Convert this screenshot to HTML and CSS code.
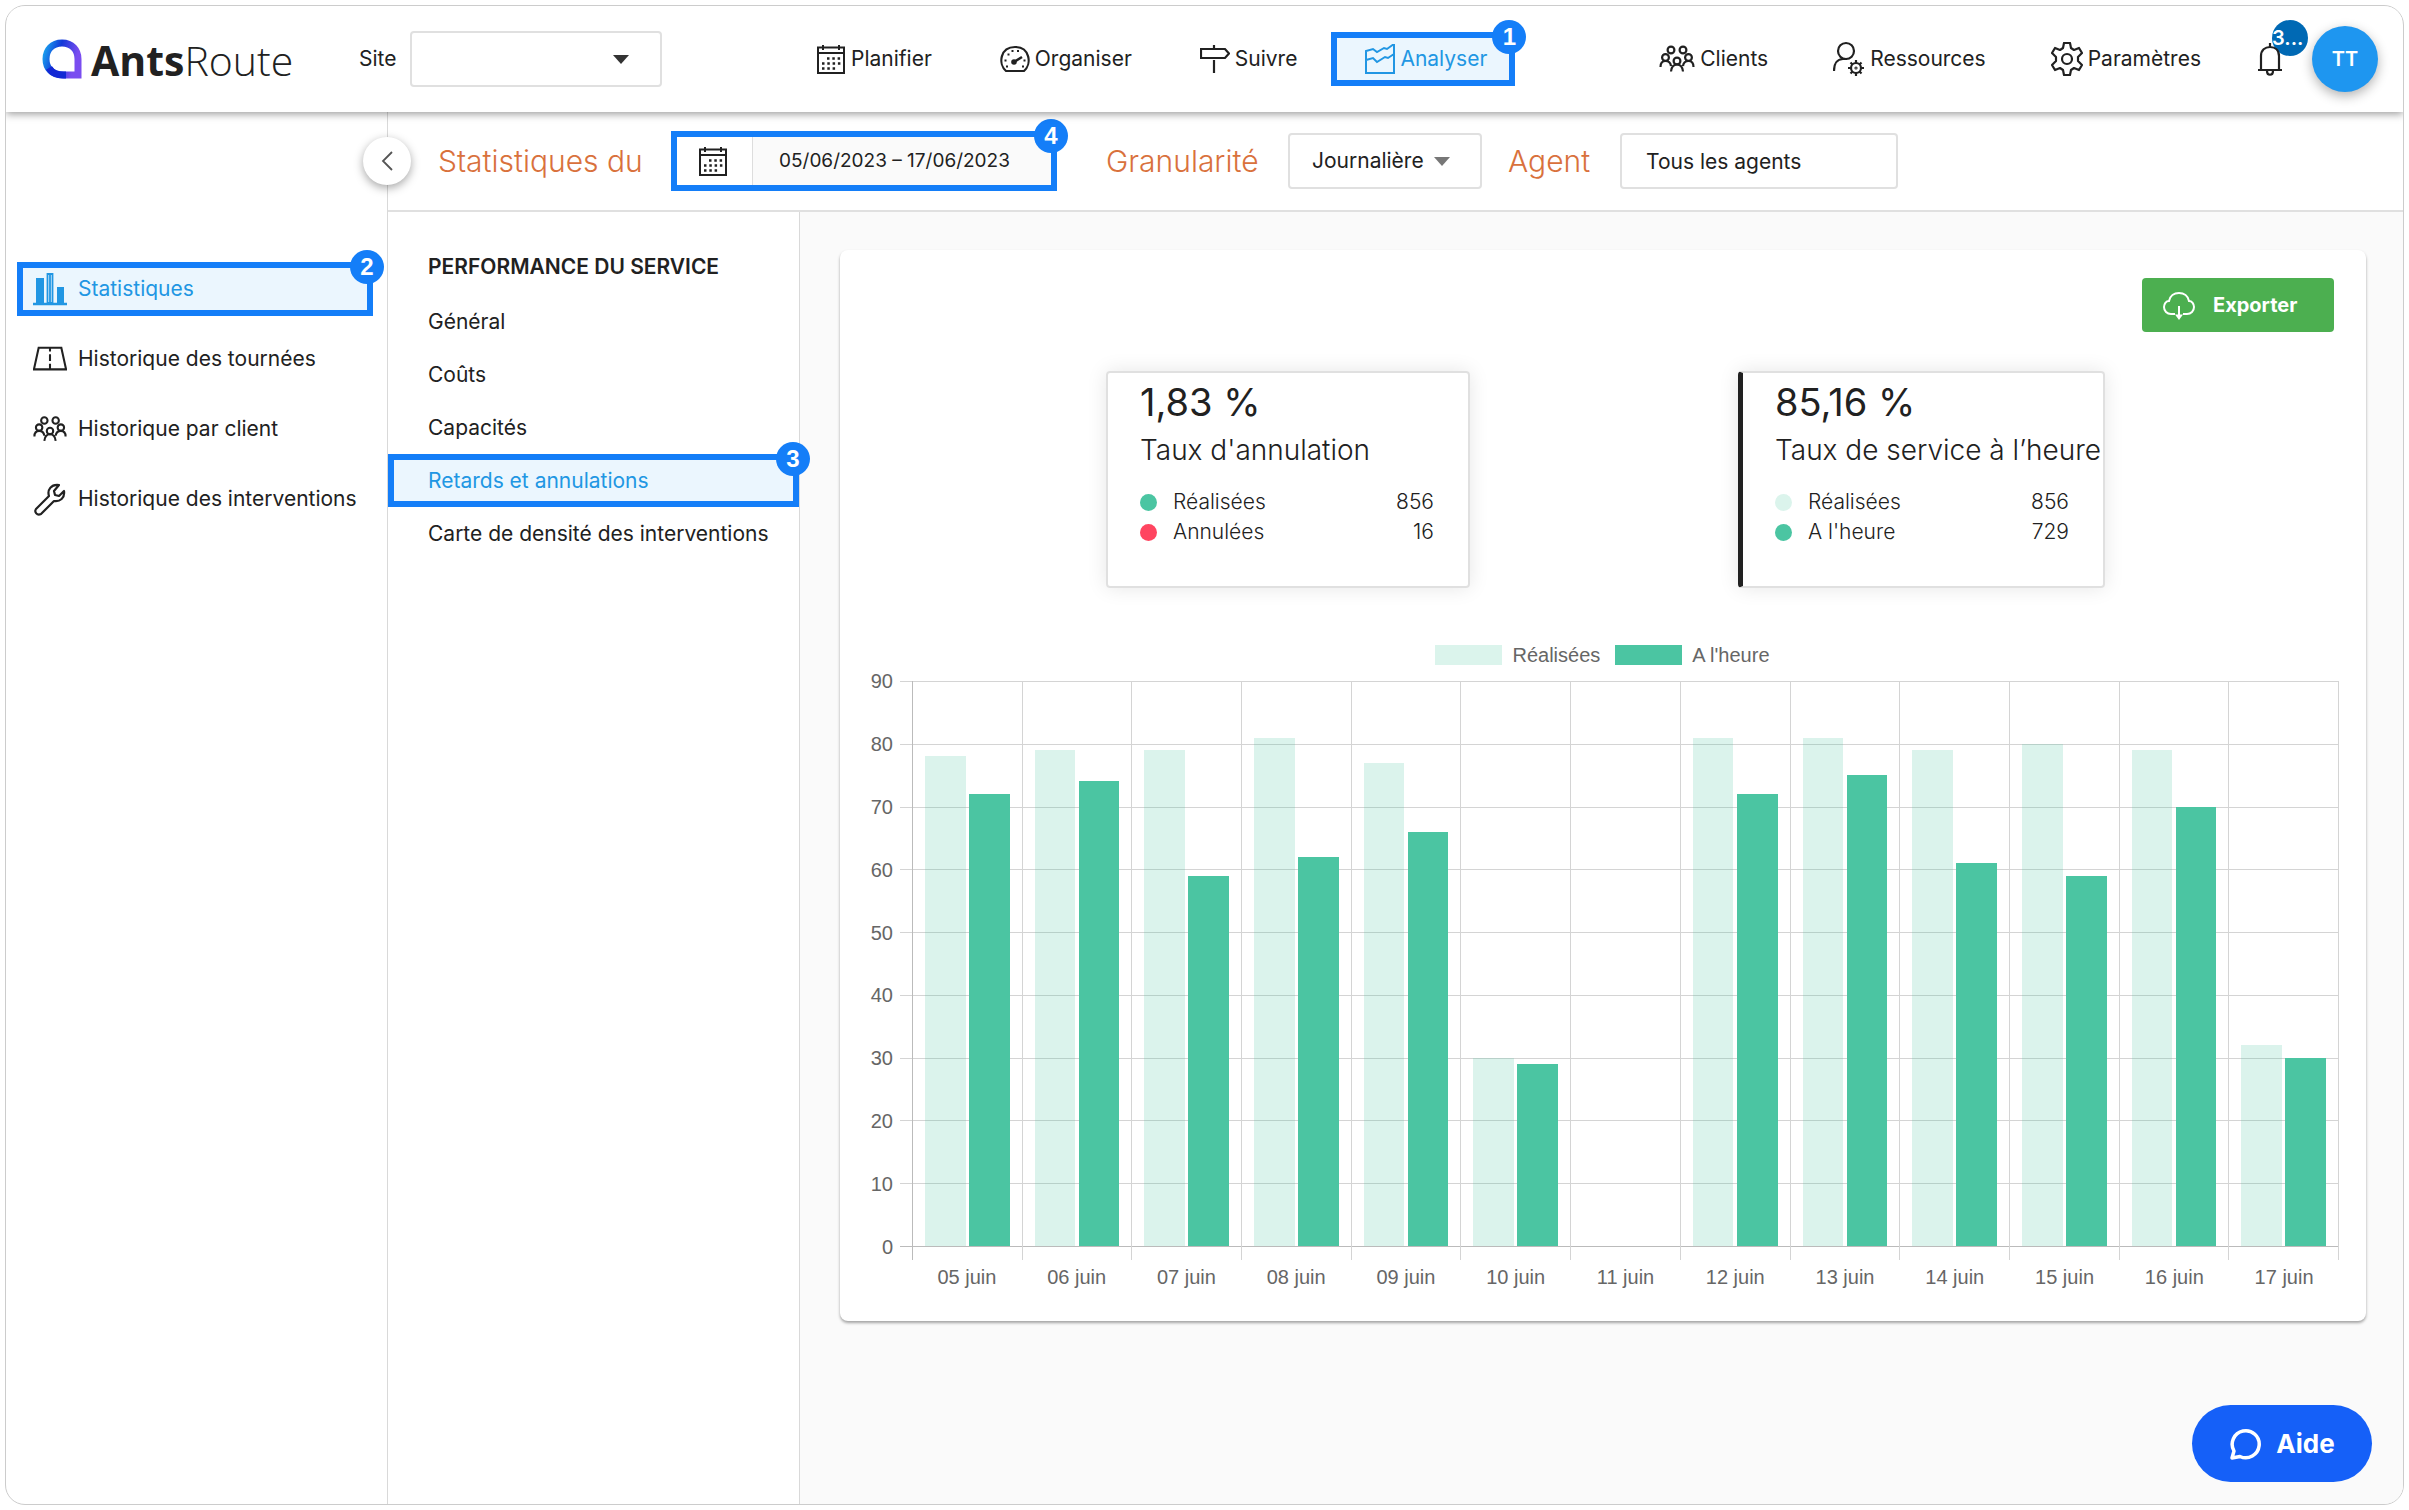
FILE: index.html
```html
<!DOCTYPE html>
<html lang="fr">
<head>
    <meta charset="UTF-8">
    <meta name="viewport" content="width=device-width, initial-scale=1.0">
    <title>AntsRoute - Statistiques</title>
    <link rel="stylesheet" href="styles.css">
</head>
<body>
    <!-- icônes partagées -->
    <svg class="sprite" width="0" height="0" aria-hidden="true">
        <symbol id="ico-calendar" viewBox="0 0 30 30">
            <path d="M2 3.500h26V29H2zM2 9h26M7 1v5M23 1v5" fill="none" stroke="currentColor" stroke-width="2"/>
            <path d="M11 14.500h13.500M6 19.500h19M6 24.500h13.500" fill="none" stroke="currentColor" stroke-width="2.500" stroke-dasharray="2.500 2.800"/>
        </symbol>
        <symbol id="ico-clients" viewBox="0 0 36 28">
            <g fill="none" stroke="currentColor" stroke-width="2.200">
                <circle cx="12" cy="5" r="3.400"/>
                <circle cx="24" cy="5" r="3.400"/>
                <circle cx="6.500" cy="12.500" r="3.400"/>
                <circle cx="29.500" cy="12.500" r="3.400"/>
                <circle cx="18" cy="16" r="3.400"/>
                <path d="M1.500 22c0-4 2-6 5-6s5 1.500 5.500 5M24 21c.5-3.500 2.500-5 5.500-5s5 2 5 6M12 26.500c.5-5 2.500-7 6-7s5.500 2 6 7"/>
            </g>
        </symbol>
    </svg>

    <div class="app">
        <header class="header">
            <a class="logo" href="#">
                <svg class="logo-mark" viewBox="0 0 40 40">
                    <defs>
                        <linearGradient id="logoGradient" x1="0" y1="0" x2="1" y2="0.300">
                            <stop offset="0" stop-color="#1aa0ee"/>
                            <stop offset="0.450" stop-color="#1238d8"/>
                            <stop offset="1" stop-color="#7a4df0"/>
                        </linearGradient>
                    </defs>
                    <path d="M20 4C10 4 4 11 4 20s6 16 16 16h16V20C36 11 30 4 20 4z" fill="none" stroke="url(#logoGradient)" stroke-width="7"/>
                    <path d="M7 29c3 5 8 7 15 7h2" fill="none" stroke="#1328d4" stroke-width="7"/>
                </svg>
                <span class="logo-text"><b>Ants</b>Route</span>
            </a>
            <label class="site-label" for="site">Site</label>
            <span class="select select-site">
                <select id="site"><option></option></select>
            </span>

            <nav class="nav nav-main">
                <a class="nav-item" href="#">
                    <svg class="ico" viewBox="0 0 30 30"><use href="#ico-calendar"/></svg>
                    Planifier
                </a>
                <a class="nav-item" href="#">
                    <svg class="ico" viewBox="0 0 30 30">
                        <path d="M6 27C-2 20 0 3 15 3s17 17 9 24z" fill="none" stroke="currentColor" stroke-width="2.200"/>
                        <path d="M6 22.500h2M4.500 16.500h2M7.500 10.500h2M11.500 7h2M17 7h2M23.500 16.500h2M22 22.500h2" stroke="currentColor" stroke-width="2" fill="none"/>
                        <path d="M14 18l8-5" stroke="currentColor" stroke-width="2.500"/>
                        <circle cx="14" cy="18" r="2.800" fill="currentColor"/>
                    </svg>
                    Organiser
                </a>
                <a class="nav-item" href="#">
                    <svg class="ico" viewBox="0 0 30 30">
                        <path d="M1 5h24l4 4.500-4 4.500H1zM14 1v4M14 16v13" fill="none" stroke="currentColor" stroke-width="2.200"/>
                    </svg>
                    Suivre
                </a>
                <a class="nav-item active" href="#">
                    <svg class="ico" viewBox="0 0 30 30">
                        <path d="M1 29V7l7-2 4 3 7-4 3 1 7-5v29zM1 16l7-2 4 4 8-5 3 1 6-4" fill="none" stroke="currentColor" stroke-width="2"/>
                    </svg>
                    Analyser
                    <span class="step">1</span>
                </a>
            </nav>

            <nav class="nav nav-side">
                <a class="nav-item" href="#">
                    <svg class="ico ico-wide" viewBox="0 0 36 28"><use href="#ico-clients"/></svg>
                    Clients
                </a>
                <a class="nav-item" href="#">
                    <svg class="ico ico-user" viewBox="0 0 32 36">
                        <g fill="none" stroke="currentColor" stroke-width="2.200">
                            <circle cx="13" cy="10" r="8"/>
                            <path d="M1 30c0-7 3-12 9-12h4"/>
                            <circle cx="23" cy="27" r="5"/>
                            <circle cx="23" cy="27" r="0.500"/>
                            <path d="M23 19v3M23 32v3M15 27h3M28 27h3M17.500 21.500l2 2M26.500 30.500l2 2M28.500 21.500l-2 2M19.500 30.500l-2 2"/>
                        </g>
                    </svg>
                    Ressources
                </a>
                <a class="nav-item" href="#">
                    <svg class="ico ico-gear" viewBox="0 0 32 34">
                        <path d="M13 1h6l1 5 3 2 5-2 3 5-4 4v4l4 4-3 5-5-2-3 2-1 5h-6l-1-5-3-2-5 2-3-5 4-4v-4l-4-4 3-5 5 2 3-2z" fill="none" stroke="currentColor" stroke-width="2.200" stroke-linejoin="round"/>
                        <circle cx="16" cy="17" r="5" fill="none" stroke="currentColor" stroke-width="2.200"/>
                    </svg>
                    Paramètres
                </a>
            </nav>

            <button class="bell" type="button" aria-label="Notifications">
                <svg viewBox="0 0 26 34">
                    <path d="M1 28h24M4 28V14c0-6 4-9 9-9s9 3 9 9v14M13 5V1M10 29c0 5 6 5 6 0" fill="none" stroke="currentColor" stroke-width="2.200"/>
                </svg>
                <span class="bell-count">3...</span>
            </button>
            <button class="avatar" type="button">TT</button>
        </header>

        <div class="body">
            <aside class="sidebar">
                <a class="side-item active" href="#">
                    <svg class="side-ico" viewBox="0 0 34 34">
                        <path d="M0 32h34" stroke="currentColor" stroke-width="2.500"/>
                        <path d="M3 6h8v26H3zM24 15h7v17h-7z" fill="currentColor"/>
                        <path d="M14.500 2h5v29h-5zM17 3v28" fill="none" stroke="currentColor" stroke-width="1.800"/>
                    </svg>
                    Statistiques
                    <span class="step">2</span>
                </a>
                <a class="side-item" href="#">
                    <svg class="side-ico" viewBox="0 0 36 34">
                        <path d="M6 5h24l5 23H1zM18 5v4M18 12v7M18 22v6" fill="none" stroke="currentColor" stroke-width="2.200"/>
                    </svg>
                    Historique des tournées
                </a>
                <a class="side-item" href="#">
                    <svg class="side-ico" viewBox="0 0 36 28"><use href="#ico-clients"/></svg>
                    Historique par client
                </a>
                <a class="side-item" href="#">
                    <svg class="side-ico" viewBox="0 0 34 34">
                        <path d="M3 27l13-13c-2-6 2-12 10-11l-5 6 1 4 4 1 5-5c1 7-4 11-10 10L8 32c-4 2-7-2-5-5z" fill="none" stroke="currentColor" stroke-width="2.200" stroke-linejoin="round"/>
                    </svg>
                    Historique des interventions
                </a>
            </aside>

            <div class="content">
                <form class="toolbar">
                    <button class="collapse" type="button" aria-label="Réduire le menu">
                        <svg viewBox="0 0 12 20"><path d="M11 1L2 10l9 9" fill="none" stroke="currentColor" stroke-width="1.800"/></svg>
                    </button>
                    <label class="toolbar-label" for="dates">Statistiques du</label>
                    <span class="dates">
                        <span class="dates-ico"><svg class="ico" viewBox="0 0 30 30"><use href="#ico-calendar"/></svg></span>
                        <input id="dates" type="text" value="05/06/2023 – 17/06/2023">
                        <span class="step">4</span>
                    </span>
                    <label class="toolbar-label label-gran" for="granularite">Granularité</label>
                    <span class="select select-gran">
                        <select id="granularite"><option>Journalière</option></select>
                    </span>
                    <label class="toolbar-label label-agent" for="agent">Agent</label>
                    <input class="agent" id="agent" type="text" value="Tous les agents">
                </form>

                <div class="columns">
                    <nav class="subnav">
                        <h2>PERFORMANCE DU SERVICE</h2>
                        <a href="#">Général</a>
                        <a href="#">Coûts</a>
                        <a href="#">Capacités</a>
                        <a class="active" href="#">Retards et annulations<span class="step">3</span></a>
                        <a href="#">Carte de densité des interventions</a>
                    </nav>

                    <main class="main">
                        <section class="card">
                            <div class="card-actions">
                                <button class="export" type="button">
                                    <svg viewBox="0 0 32 30">
                                        <path d="M12 24H8c-4 0-7-3-7-7 0-3 2-6 5-6 1-5 5-8 10-8s9 3 10 8c3 0 5 3 5 6 0 4-3 7-7 7h-4M16 16v10" fill="none" stroke="currentColor" stroke-width="2"/>
                                        <path d="M12 24.500h8l-4 5.500z" fill="currentColor"/>
                                    </svg>
                                    Exporter
                                </button>
                            </div>

                            <div class="stats">
                                <div class="stat">
                                    <div class="stat-value">1,83 %</div>
                                    <div class="stat-label">Taux d'annulation</div>
                                    <div class="stat-row"><i class="dot dot-green"></i>Réalisées<span>856</span></div>
                                    <div class="stat-row"><i class="dot dot-red"></i>Annulées<span>16</span></div>
                                </div>
                                <div class="stat selected">
                                    <div class="stat-value">85,16 %</div>
                                    <div class="stat-label">Taux de service à l’heure</div>
                                    <div class="stat-row"><i class="dot dot-light"></i>Réalisées<span>856</span></div>
                                    <div class="stat-row"><i class="dot dot-green"></i>A l'heure<span>729</span></div>
                                </div>
                            </div>

                            <div class="legend">
                                <i class="swatch swatch-light"></i><span>Réalisées</span>
                                <i class="swatch swatch-green"></i><span>A l'heure</span>
                            </div>

                            <div class="chart">
                                <div class="y-axis">
                                    <span>90</span><span>80</span><span>70</span><span>60</span><span>50</span><span>40</span><span>30</span><span>20</span><span>10</span><span>0</span>
                                </div>
                                <div class="plot">
                                    <div class="rows"><i></i><i></i><i></i><i></i><i></i><i></i><i></i><i></i><i></i></div>
                                    <div class="cols">
                                        <div class="col"><i class="bar bar-light" style="height:86.67%"></i><i class="bar" style="height:80%"></i></div>
                                        <div class="col"><i class="bar bar-light" style="height:87.78%"></i><i class="bar" style="height:82.22%"></i></div>
                                        <div class="col"><i class="bar bar-light" style="height:87.78%"></i><i class="bar" style="height:65.56%"></i></div>
                                        <div class="col"><i class="bar bar-light" style="height:90%"></i><i class="bar" style="height:68.89%"></i></div>
                                        <div class="col"><i class="bar bar-light" style="height:85.56%"></i><i class="bar" style="height:73.33%"></i></div>
                                        <div class="col"><i class="bar bar-light" style="height:33.33%"></i><i class="bar" style="height:32.22%"></i></div>
                                        <div class="col"></div>
                                        <div class="col"><i class="bar bar-light" style="height:90%"></i><i class="bar" style="height:80%"></i></div>
                                        <div class="col"><i class="bar bar-light" style="height:90%"></i><i class="bar" style="height:83.33%"></i></div>
                                        <div class="col"><i class="bar bar-light" style="height:87.78%"></i><i class="bar" style="height:67.78%"></i></div>
                                        <div class="col"><i class="bar bar-light" style="height:88.89%"></i><i class="bar" style="height:65.56%"></i></div>
                                        <div class="col"><i class="bar bar-light" style="height:87.78%"></i><i class="bar" style="height:77.78%"></i></div>
                                        <div class="col"><i class="bar bar-light" style="height:35.56%"></i><i class="bar" style="height:33.33%"></i></div>
                                    </div>
                                </div>
                                <div class="x-axis">
                                    <span>05 juin</span><span>06 juin</span><span>07 juin</span><span>08 juin</span><span>09 juin</span><span>10 juin</span><span>11 juin</span><span>12 juin</span><span>13 juin</span><span>14 juin</span><span>15 juin</span><span>16 juin</span><span>17 juin</span>
                                </div>
                            </div>
                        </section>
                    </main>
                </div>
            </div>
        </div>

        <button class="help" type="button">
            <svg viewBox="0 0 34 34">
                <path d="M5 24A13.500 13.500 0 1 1 11 29.500L3 31z" fill="none" stroke="currentColor" stroke-width="3.500" stroke-linejoin="round"/>
            </svg>
            Aide
        </button>
    </div>
</body>
</html>
```
FILE: styles.css
```css
* {
    box-sizing: border-box;
}
body {
    margin: 0;
    padding: 5px;
    background-color: #fff;
    color: #212121;
    font-family: Inter, "Open Sans", sans-serif;
    font-size: 21px;
    line-height: 28px;
}
a {
    color: inherit;
    text-decoration: none;
}
button, input, select {
    margin: 0;
    font: inherit;
    color: inherit;
}
button {
    padding: 0;
    border: none;
    cursor: pointer;
}
.sprite {
    position: absolute;
}
.app {
    display: flex;
    flex-direction: column;
    min-height: calc(100vh - 10px);
    position: relative;
    border: 1px solid #ccc;
    border-radius: 20px;
    overflow: hidden;
}

/* ---------- header ---------- */
.header {
    display: flex;
    align-items: center;
    height: 106px;
    padding: 0 25px 0 36px;
    background-color: #fff;
    box-shadow: 0 2px 8px rgba(0, 0, 0, 0.4);
    position: relative;
    z-index: 2;
}
.logo {
    display: flex;
    align-items: center;
    gap: 9px;
    width: 317px;
}
.logo-mark {
    width: 40px;
    height: 40px;
}
.logo-text {
    font-family: "Open Sans", sans-serif;
    font-size: 41px;
    font-weight: 300;
    line-height: 48px;
    padding-top: 2px;
}
.logo-text b {
    font-weight: 700;
}
.site-label {
    width: 51px;
}
.select {
    display: grid;
    align-items: center;
}
.select select {
    grid-area: 1 / 1;
    width: 100%;
    height: 56px;
    appearance: none;
    background-color: #fff;
    border: 2px solid #e0e0e0;
    border-radius: 4px;
}
.select::after {
    content: "";
    grid-area: 1 / 1;
    justify-self: end;
    border: 8px solid transparent;
    border-top: 9px solid #333;
    border-bottom: none;
    pointer-events: none;
}
.select-site {
    width: 252px;
}
.select-site::after {
    margin-right: 33px;
}
.nav {
    display: flex;
    gap: 6px;
}
.nav-main {
    margin-left: 120px;
}
.nav-side {
    gap: 3px;
    margin-left: auto;
}
.nav-item {
    display: flex;
    align-items: center;
    gap: 5px;
    height: 54px;
    padding: 0 22px 0 28px;
    border: 6px solid transparent;
    position: relative;
}
.nav-item.active,
.side-item.active,
.subnav a.active {
    border-color: #147ef8;
    background-color: #ebf6fe;
    color: #2196e3;
}
.ico {
    width: 30px;
    height: 30px;
}
.ico-wide {
    width: 36px;
}
.ico-user {
    width: 32px;
    height: 36px;
}
.ico-gear {
    width: 32px;
    height: 34px;
}
.step {
    position: absolute;
    top: -18px;
    right: -17px;
    width: 34px;
    height: 34px;
    border-radius: 50%;
    background-color: #147ef8;
    color: #fff;
    font-family: "Liberation Sans", sans-serif;
    font-size: 24px;
    font-weight: bold;
    line-height: 34px;
    text-align: center;
}
.bell {
    width: 26px;
    height: 34px;
    margin-left: 28px;
    margin-right: 29px;
    background: none;
    position: relative;
}
.bell svg {
    display: block;
    width: 26px;
    height: 34px;
    position: relative;
    z-index: 1;
}
.bell-count {
    position: absolute;
    left: 15px;
    top: -22px;
    width: 36px;
    height: 36px;
    border-radius: 50%;
    background-color: #0069b4;
    color: #fff;
    font-size: 20px;
    font-weight: 600;
    line-height: 36px;
    text-align: left;
}
.avatar {
    width: 66px;
    height: 66px;
    border-radius: 50%;
    background-color: #1e96f0;
    color: #fff;
    font-size: 20px;
    font-weight: 600;
    box-shadow: 0 4px 12px rgba(0, 0, 0, 0.3);
}

/* ---------- sidebar ---------- */
.body {
    display: flex;
    flex: 1;
}
.sidebar {
    display: flex;
    flex-direction: column;
    gap: 16px;
    width: 382px;
    padding: 150px 14px 0 11px;
    border-right: 1px solid #d9d9d9;
}
.side-item {
    display: flex;
    align-items: center;
    gap: 11px;
    height: 54px;
    padding-left: 10px;
    border: 6px solid transparent;
    white-space: nowrap;
    position: relative;
}
.side-ico {
    flex: none;
    width: 34px;
    height: 34px;
}

/* ---------- toolbar ---------- */
.content {
    display: flex;
    flex: 1;
    flex-direction: column;
    min-width: 0;
}
.toolbar {
    display: flex;
    align-items: center;
    height: 100px;
    padding-left: 50px;
    border-bottom: 2px solid #e0e0e0;
    position: relative;
}
.collapse {
    display: flex;
    align-items: center;
    justify-content: center;
    position: absolute;
    left: -25px;
    top: 25px;
    width: 48px;
    height: 48px;
    border-radius: 50%;
    background-color: #fff;
    color: #555;
    box-shadow: 0 3px 10px rgba(0, 0, 0, 0.35);
}
.collapse svg {
    width: 12px;
    height: 20px;
}
.toolbar-label {
    width: 233px;
    color: #d9713c;
    font-size: 30px;
    font-weight: 300;
}
.label-gran {
    width: 182px;
    margin-left: 49px;
}
.label-agent {
    width: 112px;
    margin-left: 26px;
}
.dates {
    display: flex;
    width: 386px;
    height: 60px;
    border: 6px solid #147ef8;
    position: relative;
}
.dates-ico {
    display: flex;
    align-items: center;
    justify-content: center;
    width: 76px;
    padding-right: 3px;
    border-right: 1px solid #ddd;
}
.dates input {
    flex: 1;
    min-width: 0;
    padding: 0 0 0 26px;
    border: none;
    background-color: #fafafa;
    font-size: 19px;
}
.select-gran {
    width: 194px;
}
.select-gran select {
    padding-left: 22px;
}
.select-gran::after {
    margin-right: 32px;
    border-top-color: #777;
}
.agent {
    width: 278px;
    height: 56px;
    padding-left: 24px;
    border: 2px solid #e0e0e0;
    border-radius: 4px;
}

/* ---------- sub navigation ---------- */
.columns {
    display: flex;
    flex: 1;
}
.subnav {
    display: flex;
    flex-direction: column;
    width: 412px;
    padding-top: 41px;
    border-right: 1px solid #d9d9d9;
}
.subnav h2 {
    margin: 0 0 14px;
    padding-left: 40px;
    font-size: 21px;
    font-weight: 600;
    line-height: 28px;
}
.subnav a {
    display: flex;
    align-items: center;
    height: 53px;
    padding-left: 34px;
    border: 6px solid transparent;
    white-space: nowrap;
    position: relative;
}

/* ---------- card ---------- */
.main {
    flex: 1;
    min-width: 0;
    padding: 38px 37px 0 40px;
    background-color: #fafafa;
}
.card {
    padding: 28px 27px 30px 20px;
    background-color: #fff;
    border-radius: 8px;
    box-shadow: 0 2px 3px rgba(0, 0, 0, 0.35);
}
.card-actions {
    display: flex;
    justify-content: flex-end;
    padding-right: 5px;
}
.export {
    display: flex;
    align-items: center;
    gap: 18px;
    width: 192px;
    height: 54px;
    padding-left: 21px;
    border-radius: 4px;
    background-color: #4caf50;
    color: #fff;
    font-size: 20px;
    font-weight: 700;
}
.export svg {
    width: 32px;
    height: 30px;
}
.stats {
    display: flex;
    justify-content: space-around;
    padding: 39px 100px 0 112px;
}
.stat {
    width: 364px;
    height: 217px;
    padding: 7px 34px 0 32px;
    border: 2px solid #e0e0e0;
    border-radius: 4px;
    box-shadow: 0 0 20px rgba(0, 0, 0, 0.1);
    font-weight: 300;
    white-space: nowrap;
}
.stat.selected {
    width: 367px;
    border-left: 5px solid #212121;
}
.stat-value {
    font-size: 38px;
    font-weight: 400;
    line-height: 44px;
}
.stat-label {
    margin: 8px 0 19px;
    font-size: 28px;
    line-height: 36px;
}
.stat-row {
    display: flex;
    align-items: center;
    height: 30px;
}
.stat-row span {
    margin-left: auto;
}
.dot {
    width: 17px;
    height: 17px;
    margin-right: 16px;
    border-radius: 50%;
}
.dot-green, .swatch-green {
    background-color: #4bc5a2;
}
.dot-red {
    background-color: #ff4560;
}
.dot-light, .swatch-light {
    background-color: #dbf4ec;
}

/* ---------- chart ---------- */
.legend, .chart {
    color: #666;
    font-family: "Liberation Sans", Arial, sans-serif;
    font-size: 20px;
}
.legend {
    display: flex;
    align-items: center;
    justify-content: center;
    gap: 10px;
    height: 28px;
    margin: 53px 0 12px;
    padding-left: 6px;
}
.legend span + .swatch {
    margin-left: 5px;
}
.swatch {
    width: 67px;
    height: 20px;
}
.chart {
    display: grid;
    grid-template-columns: 33px 1fr;
    column-gap: 19px;
}
.y-axis {
    display: flex;
    flex-direction: column;
    justify-content: space-between;
    margin: -10px 0;
    line-height: 20px;
    text-align: right;
}
.plot {
    display: grid;
    height: 566px;
}
.rows {
    display: grid;
    grid-area: 1 / 1;
    grid-template-rows: repeat(9, 1fr);
    margin-left: -12px;
    border-bottom: 1px solid #bbb;
}
.rows i {
    border-top: 1px solid #d4d4d4;
}
.cols {
    display: flex;
    grid-area: 1 / 1;
    margin-bottom: -13px;
    border-right: 1px solid #d4d4d4;
}
.col {
    display: flex;
    flex: 1;
    align-items: flex-end;
    gap: 4%;
    padding: 0 12px 14px;
    border-left: 1px solid #d4d4d4;
}
.col:first-child {
    border-left-color: #bbb;
}
.bar {
    flex: 1;
    background-color: #4bc5a2;
}
.bar-light {
    background-color: rgba(75, 197, 162, 0.2);
}
.x-axis {
    display: flex;
    grid-column: 2;
    margin-top: 16px;
}
.x-axis span {
    flex: 1;
    text-align: center;
}

/* ---------- help ---------- */
.help {
    display: flex;
    align-items: center;
    justify-content: center;
    gap: 13px;
    position: absolute;
    right: 31px;
    bottom: 22px;
    width: 180px;
    height: 77px;
    border-radius: 39px;
    background-color: #1560f8;
    color: #fff;
    font-size: 26px;
    font-weight: 700;
}
.help svg {
    width: 34px;
    height: 34px;
}
```
